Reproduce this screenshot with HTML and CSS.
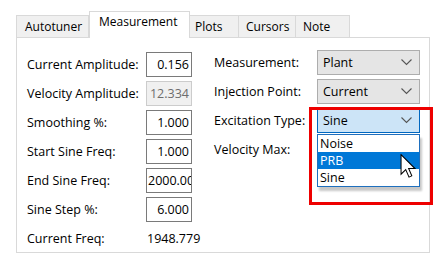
FILE: index.html
```html
<!DOCTYPE html>
<html lang="en">
<head>
    <meta charset="UTF-8">
    <title>Measurement</title>
    <link rel="stylesheet" href="styles.css">
</head>
<body>
    <div class="window">
        <div class="tabs">
            <div class="tab tab-autotuner">Autotuner</div>
            <div class="tab tab-active">Measurement</div>
            <div class="tab tab-plots">Plots</div>
            <div class="tab tab-cursors">Cursors</div>
            <div class="tab tab-note">Note</div>
        </div>

        <div class="panel">
            <div class="col col-left">
                <div class="row"><span class="label">Current Amplitude:</span><div class="num">0.156</div></div>
                <div class="row"><span class="label">Velocity Amplitude:</span><div class="num disabled">12.334</div></div>
                <div class="row"><span class="label">Smoothing %:</span><div class="num">1.000</div></div>
                <div class="row"><span class="label">Start Sine Freq:</span><div class="num">1.000</div></div>
                <div class="row"><span class="label">End Sine Freq:</span><div class="num">2000.000</div></div>
                <div class="row"><span class="label">Sine Step %:</span><div class="num">6.000</div></div>
                <div class="row"><span class="label">Current Freq:</span><span class="readout">1948.779</span></div>
            </div>

            <div class="col col-right">
                <div class="row">
                    <span class="label label-right">Measurement:</span>
                    <div class="combo"><span>Plant</span><svg class="chev" width="11" height="7" viewBox="0 0 11 7"><path d="M0.5 0.5 L5.5 5.5 L10.5 0.5" fill="none" stroke="#555" stroke-width="1.1"/></svg></div>
                </div>
                <div class="row">
                    <span class="label label-right">Injection Point:</span>
                    <div class="combo"><span>Current</span><svg class="chev" width="11" height="7" viewBox="0 0 11 7"><path d="M0.5 0.5 L5.5 5.5 L10.5 0.5" fill="none" stroke="#555" stroke-width="1.1"/></svg></div>
                </div>
                <div class="row">
                    <span class="label label-right">Excitation Type:</span>
                    <div class="combo combo-focus">
                        <span>Sine</span><svg class="chev" width="11" height="7" viewBox="0 0 11 7"><path d="M0.5 0.5 L5.5 5.5 L10.5 0.5" fill="none" stroke="#555" stroke-width="1.1"/></svg>
                        <!-- open drop-down list -->
                        <div class="droplist">
                            <div class="item">Noise</div>
                            <div class="item item-hot">PRB</div>
                            <div class="item">Sine</div>
                        </div>
                    </div>
                </div>
                <div class="row">
                    <span class="label label-right">Velocity Max:</span>
                    <div class="combo"></div>
                </div>
            </div>
        </div>

        <svg class="pointer" width="16" height="24" viewBox="0 0 12 19">
            <path d="M0.5 0.5 L0.5 16 L4.2 12.4 L6.8 18.3 L9 17.3 L6.5 11.5 L11.5 11.5 Z" fill="#fff" stroke="#000" stroke-width="0.8" stroke-linejoin="miter"/>
        </svg>
        <div class="highlight"></div>
    </div>
</body>
</html>
```

FILE: styles.css
```css
body {
    margin: 0;
    background-color: #fff;
    font-family: "Open Sans", "Liberation Sans", sans-serif;
    font-size: 12.5px;
    color: #000;
}
.window {
    position: relative;
    width: 446px;
    height: 271px;
    padding: 11px 0 0 16px;
    box-sizing: border-box;
}

/* tab strip */
.tabs {
    display: flex;
    align-items: flex-end;
    height: 26px;
    font-size: 12px;
}
.tab {
    box-sizing: border-box;
    height: 22px;
    padding: 2px 0 0 8px;
    background-color: #f0f0f0;
    border: 1px solid #d9d9d9;
    border-bottom: none;
    border-left: none;
    line-height: 18px;
}
.tab-autotuner {
    width: 73px;
    border-left: 1px solid #d9d9d9;
}
.tab-active {
    position: relative;
    z-index: 2;
    width: 101px;
    height: 27px;
    margin-bottom: -1px;
    padding: 1px 0 0 9px;
    background-color: #fff;
    border-left: 1px solid #d9d9d9;
}
.tab-plots { width: 49px; padding-left: 5px; }
.tab-cursors { width: 57px; padding-left: 7px; }
.tab-note { width: 54px; padding-left: 7px; }

/* page body */
.panel {
    display: grid;
    grid-template-columns: 165px 206px;
    column-gap: 22px;
    align-items: start;
    width: 414px;
    height: 216px;
    box-sizing: border-box;
    padding: 12px 0 0 10px;
    border: 1px solid #d9d9d9;
    background-color: #fff;
}
.col {
    display: flex;
    flex-direction: column;
    min-width: 0;
}
.col-right {
    margin-top: -2px;
}
.row {
    display: flex;
    align-items: center;
    height: 29px;
}
.label {
    flex: 0 0 119px;
    width: 119px;
    min-width: 0;
    white-space: nowrap;
}
.label-right {
    flex-basis: 103px;
    width: 103px;
}
.num {
    box-sizing: border-box;
    flex: 0 0 46px;
    height: 25px;
    padding: 0 2px 0 1px;
    border: 1px solid #7a7a7a;
    background-color: #fff;
    text-align: right;
    line-height: 23px;
    white-space: nowrap;
    overflow: hidden;
}
.num.disabled {
    border-color: #cccccc;
    background-color: #f0f0f0;
    color: #6d6d6d;
}
.readout {
    padding-left: 1px;
    white-space: nowrap;
}

/* combo boxes */
.combo {
    position: relative;
    box-sizing: border-box;
    display: flex;
    align-items: center;
    justify-content: space-between;
    flex: 0 0 103px;
    height: 25px;
    padding: 0 7px 0 5px;
    background-color: #e5e5e5;
    border: 1px solid #adadad;
}
.combo-focus {
    background-color: #cce4f7;
    border-color: #0067c0;
    z-index: 3;
}
.droplist {
    position: absolute;
    left: -1px;
    top: 25px;
    width: 103px;
    box-sizing: border-box;
    border: 1px solid #1e6fbe;
    background-color: #fff;
    box-shadow: 2px 4px 2px rgba(0, 0, 0, 0.22);
}
.item {
    height: 17px;
    line-height: 17px;
    padding-left: 2px;
}
.item-hot {
    background-color: #0078d7;
    color: #fff;
}

/* mouse pointer and red annotation frame sit over the form */
.pointer {
    position: absolute;
    left: 400px;
    top: 154px;
    z-index: 4;
}
.highlight {
    position: absolute;
    left: 309px;
    top: 107px;
    width: 118px;
    height: 92px;
    border: 3px solid #ee0000;
    z-index: 5;
}
```
